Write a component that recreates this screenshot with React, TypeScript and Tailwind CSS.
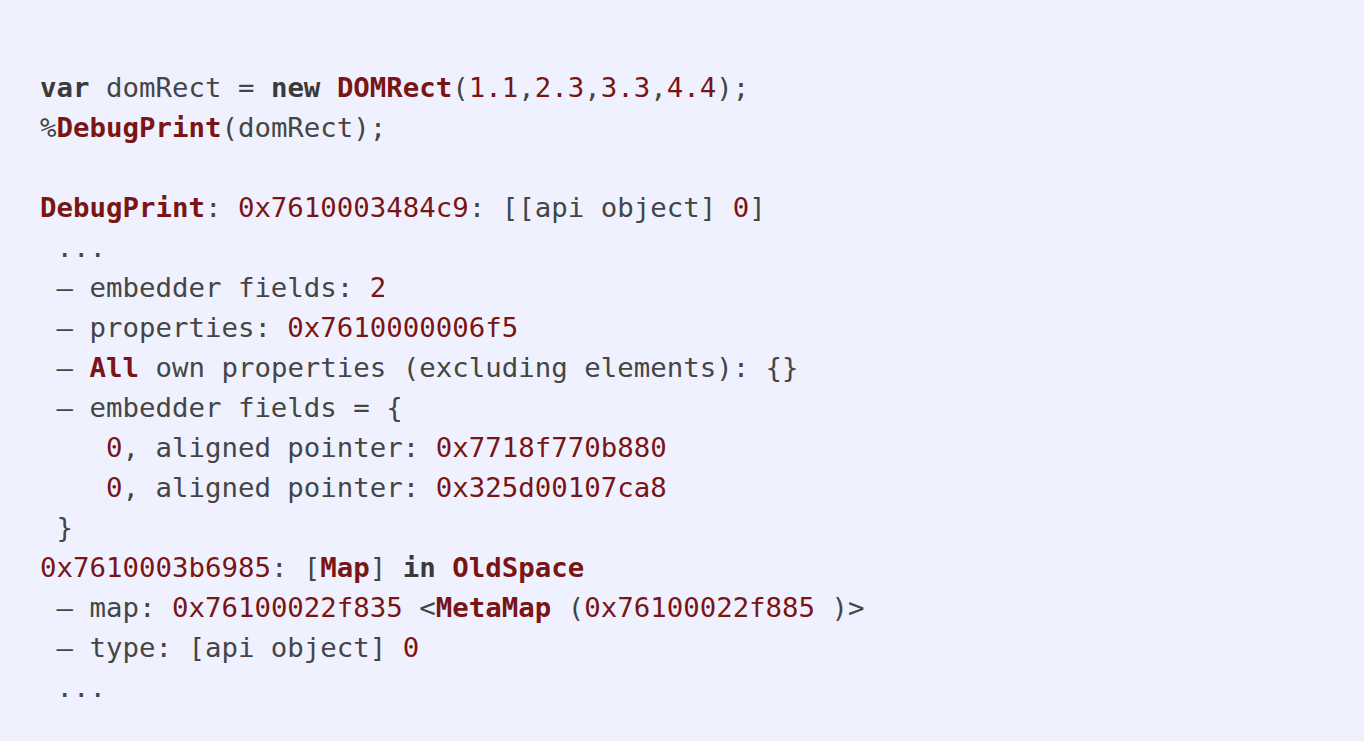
import React from "react";

type Seg = [string, string?];

const R = "text-[#7b1414]";
const RB = "text-[#7b1414] font-bold";
const GB = "text-[#3a3a3a] font-bold";

const lines: Seg[][] = [
  [["var", GB], [" domRect = "], ["new", GB], [" "], ["DOMRect", RB], ["("], ["1.1", R], [","], ["2.3", R], [","], ["3.3", R], [","], ["4.4", R], [");"]],
  [["%"], ["DebugPrint", RB], ["(domRect);"]],
  [],
  [["DebugPrint", RB], [": "], ["0x7610003484c9", R], [": [[api object] "], ["0", R], ["]"]],
  [[" ..."]],
  [[" – embedder fields: "], ["2", R]],
  [[" – properties: "], ["0x7610000006f5", R]],
  [[" – "], ["All", RB], [" own properties (excluding elements): {}"]],
  [[" – embedder fields = {"]],
  [["    "], ["0", R], [", aligned pointer: "], ["0x7718f770b880", R]],
  [["    "], ["0", R], [", aligned pointer: "], ["0x325d00107ca8", R]],
  [[" }"]],
  [["0x7610003b6985", R], [": ["], ["Map", RB], ["] "], ["in", GB], [" "], ["OldSpace", RB]],
  [[" – map: "], ["0x76100022f835", R], [" <"], ["MetaMap", RB], [" ("], ["0x76100022f885", R], [" )>"]],
  [[" – type: [api object] "], ["0", R]],
  [[" ..."]],
];

export default function App() {
  return (
    <div className="min-h-screen w-full bg-[#eff2fe]">
      <pre className="pl-10 pt-[68px] text-[27.4px] leading-[40px] text-[#454545] font-['DejaVu_Sans_Mono',monospace] whitespace-pre">
        {lines.map((segs, i) => (
          <div key={i} className="h-10">
            {segs.map(([t, c], j) => (
              <span key={j} className={c}>
                {t}
              </span>
            ))}
          </div>
        ))}
      </pre>
    </div>
  );
}
